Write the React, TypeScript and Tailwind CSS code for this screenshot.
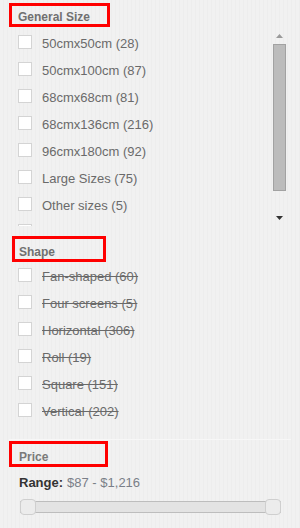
import React from "react";

const sizes = [
  "50cmx50cm (28)",
  "50cmx100cm (87)",
  "68cmx68cm (81)",
  "68cmx136cm (216)",
  "96cmx180cm (92)",
  "Large Sizes (75)",
  "Other sizes (5)",
  "",
];

const shapes = [
  "Fan-shaped (60)",
  "Four screens (5)",
  "Horizontal (306)",
  "Roll (19)",
  "Square (151)",
  "Vertical (202)",
];

function Row({ label, strike }: { label: string; strike?: boolean }) {
  return (
    <div className="flex h-[27px] shrink-0 items-center pl-[18px]">
      <span className="block h-[14px] w-[14px] shrink-0 border border-[#d4d4d4] bg-white" />
      {label ? (
        <span
          className={
            "ml-[10px] mt-[4px] whitespace-nowrap text-[13px] leading-[15px] text-[#6a6a6a]" +
            (strike ? " line-through decoration-[#6a6a6a]" : "")
          }
        >
          {label}
        </span>
      ) : null}
    </div>
  );
}

export default function App() {
  return (
    <div
      className="flex h-[528px] w-[300px] flex-col overflow-hidden bg-[#f0f0f0] bg-[repeating-linear-gradient(90deg,#f1f1f1_0px,#f1f1f1_3px,#ededed_3px,#ededed_4px)]"
      style={{ fontFamily: '"Liberation Sans", Arial, sans-serif' }}
    >
      {/* General Size */}
      <div className="ml-[9px] mt-[3px] flex h-[24px] w-[101px] items-center border-[3px] border-[#ff0000] pl-[6px]">
        <span className="mt-[4px] text-[12px] font-bold leading-none text-[#707070]">General Size</span>
      </div>
      <div className="flex h-[199px] shrink-0 overflow-hidden">
        <div className="flex flex-1 flex-col pt-[1px]">
          {sizes.map((s, i) => (
            <Row key={i} label={s} />
          ))}
        </div>
        <div className="mr-[14px] flex w-[13px] flex-col items-center pt-[7px]">
          <svg width="7" height="4" viewBox="0 0 7 4">
            <polygon points="3.5,0 7,4 0,4" fill="#9a9a9a" />
          </svg>
          <div className="mt-[6px] h-[147px] w-[13px] border border-[#a2a2a2] bg-[#bcbcbc]" />
          <div className="mt-[25px]">
            <svg width="7" height="4" viewBox="0 0 7 4">
              <polygon points="0,0 7,0 3.5,4" fill="#333" />
            </svg>
          </div>
        </div>
      </div>

      {/* Shape */}
      <div className="ml-[12px] mt-[10px] flex h-[26px] w-[94px] items-center border-[3px] border-[#ff0000] pl-[4px]">
        <span className="mt-[5px] text-[12px] font-bold leading-none text-[#707070]">Shape</span>
      </div>
      <div className="-mt-[1px] flex flex-col">
        {shapes.map((s) => (
          <Row key={s} label={s} strike />
        ))}
      </div>

      {/* Price */}
      <div className="mx-[9px] mt-[16px] h-px bg-[#f7f7f7]" />
      <div className="ml-[9px] mt-[1px] flex h-[26px] w-[99px] items-center border-[3px] border-[#ff0000] pl-[7px]">
        <span className="mt-[5px] text-[12px] font-bold leading-none text-[#7a7a7a]">Price</span>
      </div>
      <div className="ml-[19px] mt-[8px] flex items-baseline text-[13px] leading-[15px]">
        <span className="font-bold text-[#333]">Range:</span>
        <span className="ml-[4px] text-[#7a7f88]">$87 - $1,216</span>
      </div>
      <div className="relative ml-[20px] mt-[9px] h-[16px] w-[261px]">
        <div className="absolute left-0 right-0 top-[2px] h-[12px] border border-[#bdbdbd] bg-[#e3e3e3]" />
        <div className="absolute left-0 top-0 h-[16px] w-[16px] rounded-[4px] border border-[#cfcfcf] bg-[#ececec]" />
        <div className="absolute right-0 top-0 h-[16px] w-[16px] rounded-[4px] border border-[#cfcfcf] bg-[#ececec]" />
      </div>
    </div>
  );
}
